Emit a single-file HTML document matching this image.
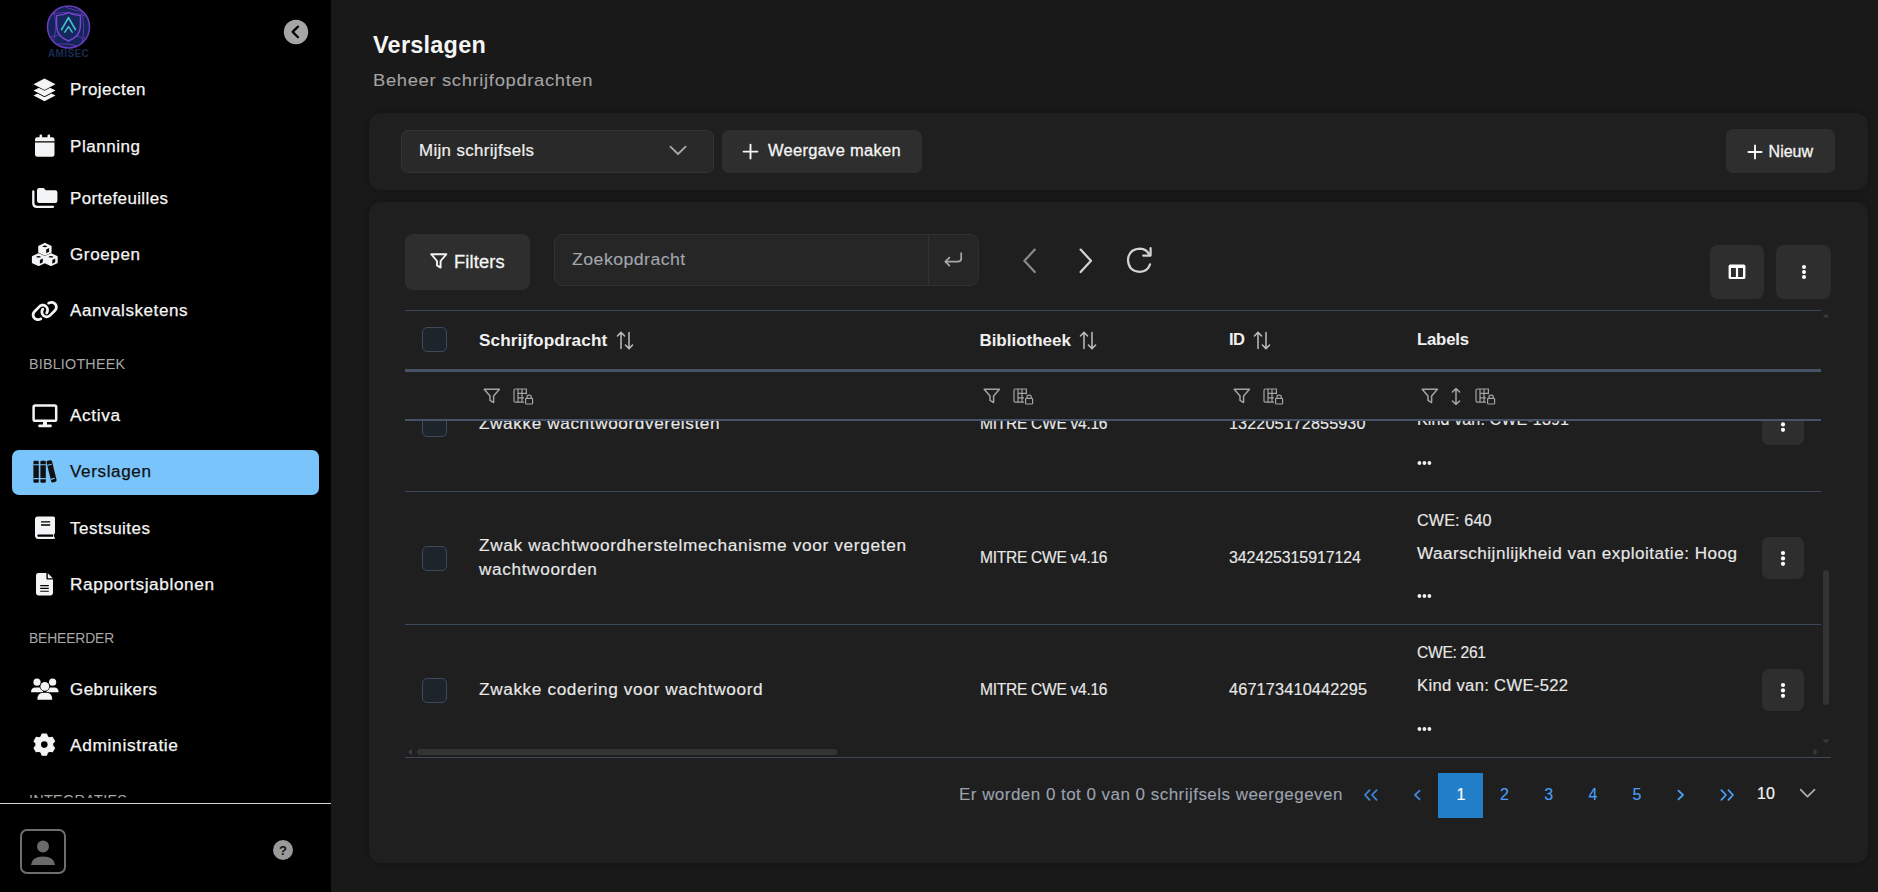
<!DOCTYPE html>
<html><head><meta charset="utf-8"><title>Verslagen</title>
<style>
html,body{margin:0;padding:0;}
body{width:1878px;height:892px;overflow:hidden;position:relative;background:#191919;font-family:"Liberation Sans",sans-serif;}
.a{position:absolute;box-sizing:border-box;}
svg.a{overflow:visible}
.t{position:absolute;white-space:nowrap;}
.card{background:#1f1f1f;border-radius:12px;box-shadow:0 0 6px rgba(0,0,0,0.25);}
</style></head><body>
<div class="a" style="left:0;top:0;width:331px;height:892px;background:#000"></div>
<div class="a" style="left:12px;top:450px;width:307px;height:45px;border-radius:7px;background:#78c4fb"></div>
<svg class="a" style="left:46px;top:4px" width="46" height="56" viewBox="0 0 46 56">
<defs><clipPath id="lc"><circle cx="22.5" cy="23" r="20.6"/></clipPath></defs>
<circle cx="22.5" cy="23" r="21" fill="#14245a" stroke="#6a3dbf" stroke-width="1.5"/>
<g clip-path="url(#lc)" fill="none" stroke="#5c37a6" stroke-width="1">
<path d="M0 12 Q20 4 46 14"/><path d="M0 34 Q24 26 46 38"/><path d="M6 2 Q14 22 5 46"/><path d="M33 1 Q42 22 34 46"/><path d="M2 42 Q22 36 42 46"/><path d="M14 0 Q30 10 46 6"/>
</g>
<path d="M22.5 8.6 Q28 11.4 34.4 11.6 V22.6 Q34 32.4 22.5 37 Q11 32.4 10.6 22.6 V11.6 Q17 11.4 22.5 8.6 Z" fill="#15275c" stroke="#7747cc" stroke-width="1.4"/>
<path d="M15.6 25.6 L22.5 13.6 L29.4 25.6" fill="none" stroke="#45c3c8" stroke-width="1.7" stroke-linecap="round" stroke-linejoin="round"/>
<path d="M18.8 28.2 L22.5 22.6 L26.2 28.2" fill="none" stroke="#45c3c8" stroke-width="1.5" stroke-linecap="round" stroke-linejoin="round"/>
<text x="22.6" y="53.2" text-anchor="middle" font-family="Liberation Sans" font-weight="700" font-size="10" fill="#1a2b50" letter-spacing="0.4">AMISEC</text>
</svg>
<svg class="a" style="left:283px;top:19px" width="26" height="26" viewBox="0 0 26 26">
<circle cx="13" cy="13" r="12.2" fill="#a6a6a6"/>
<path d="M15 7.6 L9.6 12.9 L15 18.2" fill="none" stroke="#000" stroke-width="2.2" stroke-linecap="round" stroke-linejoin="round"/>
</svg>
<div class="t" style="left:69.50px;top:82.00px;font-size:16px;line-height:16px;color:#f5f5f5;letter-spacing:0.466px;transform:scaleX(1.0584);transform-origin:0 0;-webkit-text-stroke:0.25px currentColor;">Projecten</div>
<div class="t" style="left:69.50px;top:139.00px;font-size:16px;line-height:16px;color:#f5f5f5;letter-spacing:0.522px;transform:scaleX(1.0623);transform-origin:0 0;-webkit-text-stroke:0.25px currentColor;">Planning</div>
<div class="t" style="left:69.50px;top:191.00px;font-size:16px;line-height:16px;color:#f5f5f5;letter-spacing:0.391px;transform:scaleX(1.0563);transform-origin:0 0;-webkit-text-stroke:0.25px currentColor;">Portefeuilles</div>
<div class="t" style="left:69.50px;top:247.00px;font-size:16px;line-height:16px;color:#f5f5f5;letter-spacing:0.609px;transform:scaleX(1.0623);transform-origin:0 0;-webkit-text-stroke:0.25px currentColor;">Groepen</div>
<div class="t" style="left:69.50px;top:303.00px;font-size:16px;line-height:16px;color:#f5f5f5;letter-spacing:0.525px;transform:scaleX(1.0645);transform-origin:0 0;-webkit-text-stroke:0.25px currentColor;">Aanvalsketens</div>
<div class="t" style="left:69.50px;top:408.00px;font-size:16px;line-height:16px;color:#f5f5f5;letter-spacing:0.596px;transform:scaleX(1.0734);transform-origin:0 0;-webkit-text-stroke:0.25px currentColor;">Activa</div>
<div class="t" style="left:69.50px;top:464.00px;font-size:16px;line-height:16px;color:#111;letter-spacing:0.573px;transform:scaleX(1.0688);transform-origin:0 0;-webkit-text-stroke:0.25px currentColor;">Verslagen</div>
<div class="t" style="left:69.50px;top:521.00px;font-size:16px;line-height:16px;color:#f5f5f5;letter-spacing:0.464px;transform:scaleX(1.0624);transform-origin:0 0;-webkit-text-stroke:0.25px currentColor;">Testsuites</div>
<div class="t" style="left:69.50px;top:577.00px;font-size:16px;line-height:16px;color:#f5f5f5;letter-spacing:0.576px;transform:scaleX(1.0740);transform-origin:0 0;-webkit-text-stroke:0.25px currentColor;">Rapportsjablonen</div>
<div class="t" style="left:69.50px;top:682.00px;font-size:16px;line-height:16px;color:#f5f5f5;letter-spacing:0.461px;transform:scaleX(1.0560);transform-origin:0 0;-webkit-text-stroke:0.25px currentColor;">Gebruikers</div>
<div class="t" style="left:69.50px;top:738.00px;font-size:16px;line-height:16px;color:#f5f5f5;letter-spacing:0.597px;transform:scaleX(1.0839);transform-origin:0 0;-webkit-text-stroke:0.25px currentColor;">Administratie</div>
<div class="t" style="left:28.90px;top:357.00px;font-size:14px;line-height:14px;color:#a8a8a8;letter-spacing:0.203px;transform:scaleX(1.0226);transform-origin:0 0;">BIBLIOTHEEK</div>
<div class="t" style="left:28.80px;top:631.00px;font-size:14px;line-height:14px;color:#a8a8a8;letter-spacing:-0.123px;transform:scaleX(0.9888);transform-origin:0 0;">BEHEERDER</div>
<div class="a" style="left:0;top:780px;width:331px;height:18px;overflow:hidden"><div class="t" style="left:28.90px;top:13.00px;font-size:14px;line-height:14px;color:#a8a8a8;letter-spacing:0.275px;transform:scaleX(1.0307);transform-origin:0 0;">INTEGRATIES</div></div>
<svg class="a" style="left:32px;top:77px" width="26" height="26" viewBox="0 0 26 26">
<g fill="#f3f4f6" stroke="#000" stroke-width="1.6" stroke-linejoin="round" paint-order="stroke">
<path d="M1.5 18.5 L12.5 13 L23.5 18.5 L12.5 24.2 Z"/>
<path d="M1.5 13.5 L12.5 8 L23.5 13.5 L12.5 19.2 Z"/>
<path d="M1.5 7.2 L12.5 1.5 L23.5 7.2 L12.5 12.9 Z"/>
</g></svg>
<svg class="a" style="left:34px;top:134px" width="22" height="24" viewBox="0 0 22 24">
<rect x="5.5" y="0.5" width="2.6" height="5" rx="1.2" fill="#f3f4f6"/>
<rect x="13.5" y="0.5" width="2.6" height="5" rx="1.2" fill="#f3f4f6"/>
<path d="M1 7.2 V5.5 Q1 3.2 3.3 3.2 H18.2 Q20.5 3.2 20.5 5.5 V7.2 Z" fill="#f3f4f6"/>
<path d="M1 8.6 H20.5 V20.5 Q20.5 22.8 18.2 22.8 H3.3 Q1 22.8 1 20.5 Z" fill="#f3f4f6"/>
</svg>
<svg class="a" style="left:31px;top:187px" width="28" height="22" viewBox="0 0 28 22">
<path d="M6 3.2 Q6 1 8.2 1 H12.6 L14.8 3.2 H24.2 Q26.4 3.2 26.4 5.4 V13.8 Q26.4 16 24.2 16 H8.2 Q6 16 6 13.8 Z" fill="#f3f4f6"/>
<path d="M2.3 4.5 V16.2 Q2.3 19.8 5.9 19.8 H22" fill="none" stroke="#f3f4f6" stroke-width="2.3" stroke-linecap="round"/>
</svg>
<svg class="a" style="left:31px;top:242px" width="28" height="26" viewBox="0 0 28 26">
<path d="M13.9 1.6000000000000005 L19.8 4.4 V10.1 L13.9 12.9 L8.0 10.1 V4.4 Z" fill="#f3f4f6" stroke="#f3f4f6" stroke-width="1.6" stroke-linejoin="round"/><path d="M11.3 4.5 Q13.9 2.6000000000000005 16.5 4.5 Q13.9 5.800000000000001 11.3 4.5 Z" fill="#000"/><path d="M15.200000000000001 7.5 L18.1 6.1 V9.8 L15.200000000000001 11.3 Z" fill="#000"/><path d="M7.6 12.000000000000002 L13.5 14.8 V20.5 L7.6 23.3 L1.6999999999999993 20.5 V14.8 Z" fill="#f3f4f6" stroke="#f3f4f6" stroke-width="1.6" stroke-linejoin="round"/><path d="M5.0 14.900000000000002 Q7.6 13.000000000000002 10.2 14.900000000000002 Q7.6 16.200000000000003 5.0 14.900000000000002 Z" fill="#000"/><path d="M8.9 17.900000000000002 L11.8 16.5 V20.200000000000003 L8.9 21.700000000000003 Z" fill="#000"/><path d="M20 12.000000000000002 L25.9 14.8 V20.5 L20 23.3 L14.1 20.5 V14.8 Z" fill="#f3f4f6" stroke="#f3f4f6" stroke-width="1.6" stroke-linejoin="round"/><path d="M17.4 14.900000000000002 Q20 13.000000000000002 22.6 14.900000000000002 Q20 16.200000000000003 17.4 14.900000000000002 Z" fill="#000"/><path d="M21.3 17.900000000000002 L24.2 16.5 V20.200000000000003 L21.3 21.700000000000003 Z" fill="#000"/>
</svg>
<svg class="a" style="left:31px;top:299.5px" width="27.5" height="22" viewBox="0 0 640 512">
<path fill="#f3f4f6" d="M579.8 267.7c56.5-56.5 56.5-148 0-204.5c-50-50-128.8-56.5-186.3-15.4l-1.6 1.1c-14.4 10.300-17.7 30.3-7.4 44.6s30.3 17.7 44.6 7.4l1.6-1.1c32.1-22.9 76-19.3 103.8 8.6c31.5 31.5 31.5 82.5 0 114L422.3 334.8c-31.5 31.5-82.5 31.5-114 0c-27.9-27.9-31.5-71.8-8.6-103.8l1.1-1.6c10.3-14.4 6.900-34.4-7.4-44.6s-34.4-6.9-44.6 7.4l-1.1 1.6C206.5 251.2 213 330 263 380c56.5 56.5 148 56.5 204.5 0L579.8 267.7zM60.2 244.3c-56.5 56.5-56.5 148 0 204.5c50 50 128.8 56.5 186.3 15.4l1.6-1.1c14.4-10.3 17.7-30.3 7.4-44.6s-30.3-17.7-44.6-7.4l-1.6 1.1c-32.1 22.9-76 19.3-103.8-8.6C74 372 74 321 105.5 289.5L217.7 177.2c31.5-31.5 82.5-31.5 114 0c27.9 27.9 31.5 71.8 8.6 103.9l-1.1 1.6c-10.3 14.4-6.9 34.4 7.4 44.6s34.4 6.9 44.6-7.4l1.1-1.6C433.5 260.8 427 182 377 132c-56.5-56.5-148-56.5-204.5 0L60.2 244.3z"/>
</svg>
<svg class="a" style="left:31px;top:403px" width="28" height="26" viewBox="0 0 28 26">
<rect x="2.6" y="2.6" width="22.6" height="15.2" rx="1.6" fill="none" stroke="#f3f4f6" stroke-width="2.5"/>
<rect x="12" y="18" width="4" height="4" fill="#f3f4f6"/>
<rect x="7.2" y="21.6" width="13.6" height="2.6" rx="1.2" fill="#f3f4f6"/>
</svg>
<svg class="a" style="left:32px;top:459px" width="26" height="26" viewBox="0 0 26 26">
<g fill="#111">
<rect x="1.4" y="1.7" width="5.4" height="22" rx="1.3"/>
<rect x="8.4" y="1.7" width="5.4" height="22" rx="1.3"/>
<path d="M14.6 3.4 Q14.4 2 15.8 1.7 L18.4 1.2 Q19.6 1 20 2.3 L24.6 21 Q24.8 22.3 23.6 22.7 L20.8 23.5 Q19.6 23.7 19.2 22.5 Z"/>
</g>
<g stroke="#78c4fb" stroke-width="1.1">
<path d="M1.4 5.8 H13.8 M1.4 19.6 H13.8"/>
<path d="M15.4 6.2 L19.6 5.2 M18.6 20.4 L22.8 19.3"/>
</g></svg>
<svg class="a" style="left:34px;top:515px" width="23" height="26" viewBox="0 0 23 26">
<path d="M1 4.4 Q1 1.6 3.8 1.6 H19.4 Q21 1.6 21 3.2 V17.6 Q21 18.8 20 19.2 V21.8 Q21 22 21 23 Q21 24 19.6 24 H4.4 Q1 24 1 20.6 Z" fill="#f3f4f6"/>
<path d="M7 6.9 H16.2 M7 10 H16.2" stroke="#000" stroke-width="1.4"/>
<path d="M4.4 19.6 H19.2 V21.8 H4.4 Q3.3 21.8 3.3 20.7 Q3.3 19.6 4.4 19.6 Z" fill="#000"/>
</svg>
<svg class="a" style="left:35px;top:572px" width="20" height="25" viewBox="0 0 20 25">
<path d="M1 3.4 Q1 1 3.4 1 H11.4 V6.6 Q11.4 7.6 12.4 7.6 H18 V21 Q18 23.4 15.6 23.4 H3.4 Q1 23.4 1 21 Z" fill="#f3f4f6"/>
<path d="M12.8 1.2 L17.8 6.2 H12.8 Z" fill="#f3f4f6"/>
<path d="M5.2 13.6 H13.8 M5.2 16.4 H13.8 M5.2 19.2 H13.8" stroke="#000" stroke-width="1.1"/>
</svg>
<svg class="a" style="left:30px;top:677px" width="30" height="26" viewBox="0 0 30 26">
<g fill="#f3f4f6" stroke="#000" stroke-width="1.2" paint-order="stroke">
<circle cx="7" cy="5.2" r="3.6"/><circle cx="22.6" cy="5.2" r="3.6"/>
<path d="M1 15.2 Q1 10.4 5.4 10.4 H9.4 Q12 10.4 13 12.6 V15.2 Z"/>
<path d="M16.6 15.2 V12.6 Q17.6 10.4 20.2 10.4 H24.2 Q28.6 10.4 28.6 15.2 Z"/>
<circle cx="14.8" cy="9.4" r="4.4"/>
<path d="M7.4 22.8 Q7.4 15.8 13 15.8 H16.6 Q22.2 15.8 22.2 22.8 Z"/>
</g></svg>
<svg class="a" style="left:33px;top:733px" width="24" height="25" viewBox="0 0 24 25">
<path d="M8.11 3.83 L9.14 1.02 L13.46 1.02 L14.49 3.83 L16.43 4.95 L19.39 4.44 L21.54 8.18 L19.62 10.48 L19.62 12.72 L21.54 15.02 L19.39 18.76 L16.43 18.25 L14.49 19.37 L13.46 22.18 L9.14 22.18 L8.11 19.37 L6.17 18.25 L3.21 18.76 L1.06 15.02 L2.98 12.72 L2.98 10.48 L1.06 8.18 L3.21 4.44 L6.17 4.95 Z" fill="#f3f4f6" stroke="#f3f4f6" stroke-width="1.2" stroke-linejoin="round"/>
<circle cx="11.3" cy="11.6" r="3.3" fill="#000"/>
</svg>
<div class="a" style="left:0;top:803px;width:331px;height:1px;background:#d4d4d4"></div>
<div class="a" style="left:20px;top:829px;width:46px;height:45px;border:2.5px solid #6e6e6e;border-radius:7px;background:#000"></div>
<svg class="a" style="left:20px;top:829px" width="46" height="45" viewBox="0 0 46 45">
<circle cx="23" cy="17.6" r="6" fill="#6a6a6a"/>
<path d="M11 36 Q11.6 27.6 23 27.4 Q34.4 27.6 35 36 Z" fill="#6a6a6a"/>
</svg>
<svg class="a" style="left:272px;top:839px" width="22" height="22" viewBox="0 0 22 22">
<circle cx="11" cy="11" r="10" fill="#9a9a9a"/>
<text x="11" y="15.6" text-anchor="middle" font-family="Liberation Sans" font-weight="700" font-size="13" fill="#111">?</text>
</svg>
<div class="t" style="left:373.00px;top:34.00px;font-size:23px;line-height:23px;color:#f5f5f5;font-weight:700;letter-spacing:0.253px;transform:scaleX(1.0190);transform-origin:0 0;">Verslagen</div>
<div class="t" style="left:373.00px;top:72.00px;font-size:17px;line-height:17px;color:#a3a3a3;letter-spacing:0.615px;transform:scaleX(1.0808);transform-origin:0 0;-webkit-text-stroke:0.1px currentColor;">Beheer schrijfopdrachten</div>
<div class="a card" style="left:369px;top:113px;width:1499px;height:77px"></div>
<div class="a" style="left:401px;top:130px;width:313px;height:43px;border:1px solid #333;border-radius:7px;background:#292929"></div>
<div class="t" style="left:418.60px;top:143.00px;font-size:16px;line-height:16px;color:#f0f0f0;letter-spacing:0.348px;transform:scaleX(1.0529);transform-origin:0 0;-webkit-text-stroke:0.2px currentColor;">Mijn schrijfsels</div>
<svg class="a" style="left:668px;top:144px" width="20" height="13" viewBox="0 0 20 13"><path d="M2.4 2.6 L10 10 L17.6 2.6" fill="none" stroke="#a8a8a8" stroke-width="1.8" stroke-linecap="round" stroke-linejoin="round"/></svg>
<div class="a" style="left:722px;top:130px;width:200px;height:43px;border-radius:7px;background:#2e2e2e"></div>
<svg class="a" style="left:742px;top:143px" width="17" height="17" viewBox="0 0 17 17"><path d="M8.5 1.6 V15.6 M1.6 8.6 H15.4" stroke="#f5f5f5" stroke-width="1.9" stroke-linecap="round"/></svg>
<div class="t" style="left:767.80px;top:143.00px;font-size:16px;line-height:16px;color:#f5f5f5;letter-spacing:0.279px;transform:scaleX(1.0299);transform-origin:0 0;-webkit-text-stroke:0.3px currentColor;">Weergave maken</div>
<div class="a" style="left:1726px;top:129px;width:109px;height:44px;border-radius:7px;background:#2e2e2e"></div>
<svg class="a" style="left:1747px;top:144px" width="16" height="16" viewBox="0 0 16 16"><path d="M8 1.4 V14.6 M1.4 8 H14.6" stroke="#f5f5f5" stroke-width="1.9" stroke-linecap="round"/></svg>
<div class="t" style="left:1768.60px;top:144.00px;font-size:16px;line-height:16px;color:#f5f5f5;letter-spacing:-0.010px;-webkit-text-stroke:0.3px currentColor;">Nieuw</div>
<div class="a card" style="left:369px;top:202px;width:1499px;height:661px"></div>
<div class="a" style="left:405px;top:234px;width:125px;height:56px;border-radius:8px;background:#2e2e2e"></div>
<svg class="a" style="left:430px;top:253px" width="18" height="16" viewBox="0 0 18 16">
<path d="M1.2 1.2 H16.4 L10.6 8 V14.6 L7 12.4 V8 Z" fill="none" stroke="#f5f5f5" stroke-width="1.9" stroke-linejoin="round"/></svg>
<div class="t" style="left:453.50px;top:253.00px;font-size:18px;line-height:18px;color:#f5f5f5;letter-spacing:0.126px;transform:scaleX(1.0157);transform-origin:0 0;-webkit-text-stroke:0.3px currentColor;">Filters</div>
<div class="a" style="left:554px;top:234px;width:425px;height:52px;border:1px solid #303030;border-radius:8px;background:#262626"></div>
<div class="a" style="left:928px;top:235px;width:1px;height:50px;background:#333"></div>
<div class="t" style="left:571.70px;top:251.00px;font-size:17px;line-height:17px;color:#a1a6ae;letter-spacing:0.407px;transform:scaleX(1.0449);transform-origin:0 0;-webkit-text-stroke:0.1px currentColor;">Zoekopdracht</div>
<svg class="a" style="left:943px;top:251px" width="21" height="17" viewBox="0 0 21 17"><g fill="none" stroke="#a8a8a8" stroke-width="1.7" stroke-linecap="round" stroke-linejoin="round"><path d="M18.2 2 V7.6 Q18.2 10.6 15.2 10.6 H2.6"/><path d="M6.4 6.6 L2.4 10.6 L6.4 14.6"/></g></svg>
<svg class="a" style="left:1019px;top:246px" width="22" height="30" viewBox="0 0 22 30"><path d="M15.8 3.6 L5.4 14.8 L15.8 26" fill="none" stroke="#8a8a8a" stroke-width="2.2" stroke-linecap="round" stroke-linejoin="round"/></svg>
<svg class="a" style="left:1075px;top:246px" width="22" height="30" viewBox="0 0 22 30"><path d="M5.6 3.6 L16 14.8 L5.6 26" fill="none" stroke="#d4d4d4" stroke-width="2.2" stroke-linecap="round" stroke-linejoin="round"/></svg>
<svg class="a" style="left:1124px;top:245px" width="32" height="30" viewBox="0 0 32 30"><g fill="none" stroke="#d4d4d4" stroke-width="2.2" stroke-linecap="round" stroke-linejoin="round"><path d="M25.4 10 Q22.6 3.8 16 3.6 Q4.6 4 4 15 Q4.4 26.2 15.6 26.8 Q23.8 26.6 26 19.4"/><path d="M26.6 3.2 V10.6 H19.2"/></g></svg>
<div class="a" style="left:1710px;top:245px;width:54px;height:54px;border-radius:8px;background:#2e2e2e"></div>
<svg class="a" style="left:1727px;top:263px" width="20" height="18" viewBox="0 0 20 18"><rect x="1.6" y="1.6" width="16.8" height="14.4" rx="1.6" fill="#fff"/><rect x="4" y="5" width="4.9" height="9" fill="#2e2e2e"/><rect x="11.1" y="5" width="4.9" height="9" fill="#2e2e2e"/></svg>
<div class="a" style="left:1776px;top:245px;width:55px;height:54px;border-radius:8px;background:#2e2e2e"></div>
<svg class="a" style="left:1799.8px;top:263px" width="8" height="18" viewBox="0 0 8 18">
<g fill="#fff"><circle cx="4" cy="4" r="2.0"/><circle cx="4" cy="9" r="2.0"/><circle cx="4" cy="14" r="2.0"/></g></svg>
<div class="a" style="left:405px;top:310px;width:1416px;height:1px;background:#3c4757"></div>
<div class="a" style="left:405px;top:369px;width:1416px;height:3px;background:#465366"></div>
<div class="a" style="left:405px;top:419px;width:1416px;height:2px;background:#465366"></div>
<div class="a" style="left:422px;top:327px;width:25px;height:25px;border:1px solid #3d4a5c;border-radius:5px;background:#1e242c"></div>
<div class="t" style="left:479.20px;top:332.00px;font-size:17px;line-height:17px;color:#f0f0f0;font-weight:700;letter-spacing:0.091px;transform:scaleX(1.0102);transform-origin:0 0;">Schrijfopdracht</div>
<svg class="a" style="left:616px;top:330.5px" width="18" height="19" viewBox="0 0 18 19">
<g fill="none" stroke="#bdbdbd" stroke-width="1.5" stroke-linecap="round" stroke-linejoin="round">
<path d="M5 17.6 V1.4 M1.4 5 L5 1.4 L8.6 5"/>
<path d="M13 1.4 V17.6 M9.4 14 L13 17.6 L16.6 14"/>
</g></svg>
<div class="t" style="left:979.40px;top:332.00px;font-size:17px;line-height:17px;color:#f0f0f0;font-weight:700;letter-spacing:-0.016px;">Bibliotheek</div>
<svg class="a" style="left:1079px;top:330.5px" width="18" height="19" viewBox="0 0 18 19">
<g fill="none" stroke="#bdbdbd" stroke-width="1.5" stroke-linecap="round" stroke-linejoin="round">
<path d="M5 17.6 V1.4 M1.4 5 L5 1.4 L8.6 5"/>
<path d="M13 1.4 V17.6 M9.4 14 L13 17.6 L16.6 14"/>
</g></svg>
<div class="t" style="left:1229.30px;top:331.00px;font-size:17px;line-height:17px;color:#f0f0f0;font-weight:700;letter-spacing:-0.515px;transform:scaleX(0.9706);transform-origin:0 0;">ID</div>
<svg class="a" style="left:1253px;top:330.5px" width="18" height="19" viewBox="0 0 18 19">
<g fill="none" stroke="#bdbdbd" stroke-width="1.5" stroke-linecap="round" stroke-linejoin="round">
<path d="M5 17.6 V1.4 M1.4 5 L5 1.4 L8.6 5"/>
<path d="M13 1.4 V17.6 M9.4 14 L13 17.6 L16.6 14"/>
</g></svg>
<div class="t" style="left:1417.00px;top:331.00px;font-size:17px;line-height:17px;color:#f0f0f0;font-weight:700;letter-spacing:-0.192px;transform:scaleX(0.9825);transform-origin:0 0;">Labels</div>
<svg class="a" style="left:482.5px;top:388px" width="18" height="16" viewBox="0 0 18 16">
<path d="M1.2 1.2 H16.4 L10.6 8 V14.6 L7 12.4 V8 Z" fill="none" stroke="#a3a3a3" stroke-width="1.5" stroke-linejoin="round"/></svg>
<svg class="a" style="left:512.5px;top:388px" width="22" height="17" viewBox="0 0 22 17">
<g fill="none" stroke="#a3a3a3" stroke-width="1.2">
<path d="M13.4 6.2 V1 H2.4 Q1 1 1 2.4 V12.8 Q1 14.2 2.4 14.2 H11"/>
<path d="M5 1 V14.2 M9 1 V14.2 M5 5.4 H13.4 M5 9.8 H11"/>
<rect x="12.6" y="10.4" width="7" height="5.6" rx="0.8"/>
<path d="M14 10.4 V8.8 Q14 7.2 16.1 7.2 Q18.2 7.2 18.2 8.8 V10.4"/>
</g></svg>
<svg class="a" style="left:982.5px;top:388px" width="18" height="16" viewBox="0 0 18 16">
<path d="M1.2 1.2 H16.4 L10.6 8 V14.6 L7 12.4 V8 Z" fill="none" stroke="#a3a3a3" stroke-width="1.5" stroke-linejoin="round"/></svg>
<svg class="a" style="left:1012.5px;top:388px" width="22" height="17" viewBox="0 0 22 17">
<g fill="none" stroke="#a3a3a3" stroke-width="1.2">
<path d="M13.4 6.2 V1 H2.4 Q1 1 1 2.4 V12.8 Q1 14.2 2.4 14.2 H11"/>
<path d="M5 1 V14.2 M9 1 V14.2 M5 5.4 H13.4 M5 9.8 H11"/>
<rect x="12.6" y="10.4" width="7" height="5.6" rx="0.8"/>
<path d="M14 10.4 V8.8 Q14 7.2 16.1 7.2 Q18.2 7.2 18.2 8.8 V10.4"/>
</g></svg>
<svg class="a" style="left:1232.5px;top:388px" width="18" height="16" viewBox="0 0 18 16">
<path d="M1.2 1.2 H16.4 L10.6 8 V14.6 L7 12.4 V8 Z" fill="none" stroke="#a3a3a3" stroke-width="1.5" stroke-linejoin="round"/></svg>
<svg class="a" style="left:1262.5px;top:388px" width="22" height="17" viewBox="0 0 22 17">
<g fill="none" stroke="#a3a3a3" stroke-width="1.2">
<path d="M13.4 6.2 V1 H2.4 Q1 1 1 2.4 V12.8 Q1 14.2 2.4 14.2 H11"/>
<path d="M5 1 V14.2 M9 1 V14.2 M5 5.4 H13.4 M5 9.8 H11"/>
<rect x="12.6" y="10.4" width="7" height="5.6" rx="0.8"/>
<path d="M14 10.4 V8.8 Q14 7.2 16.1 7.2 Q18.2 7.2 18.2 8.8 V10.4"/>
</g></svg>
<svg class="a" style="left:1420.5px;top:388px" width="18" height="16" viewBox="0 0 18 16">
<path d="M1.2 1.2 H16.4 L10.6 8 V14.6 L7 12.4 V8 Z" fill="none" stroke="#a3a3a3" stroke-width="1.5" stroke-linejoin="round"/></svg>
<svg class="a" style="left:1474.5px;top:388px" width="22" height="17" viewBox="0 0 22 17">
<g fill="none" stroke="#a3a3a3" stroke-width="1.2">
<path d="M13.4 6.2 V1 H2.4 Q1 1 1 2.4 V12.8 Q1 14.2 2.4 14.2 H11"/>
<path d="M5 1 V14.2 M9 1 V14.2 M5 5.4 H13.4 M5 9.8 H11"/>
<rect x="12.6" y="10.4" width="7" height="5.6" rx="0.8"/>
<path d="M14 10.4 V8.8 Q14 7.2 16.1 7.2 Q18.2 7.2 18.2 8.8 V10.4"/>
</g></svg>
<svg class="a" style="left:1450px;top:387px" width="12" height="19" viewBox="0 0 12 19"><g fill="none" stroke="#a3a3a3" stroke-width="1.5" stroke-linecap="round" stroke-linejoin="round"><path d="M6 1.6 V17.4 M2.4 5 L6 1.6 L9.6 5 M2.4 14 L6 17.4 L9.6 14"/></g></svg>
<div class="a" style="left:369px;top:421px;width:1499px;height:336px;overflow:hidden"><div class="a" style="left:-369px;top:0;width:1878px;height:400px"><div class="a" style="left:422px;top:-9px;width:25px;height:25px;border:1px solid #3d4a5c;border-radius:5px;background:#1e242c"></div>
<div class="t" style="left:478.80px;top:-5.00px;font-size:16px;line-height:16px;color:#e8e8e8;letter-spacing:0.571px;transform:scaleX(1.0731);transform-origin:0 0;-webkit-text-stroke:0.15px currentColor;">Zwakke wachtwoordvereisten</div>
<div class="t" style="left:979.50px;top:-5.00px;font-size:16px;line-height:16px;color:#e8e8e8;letter-spacing:-0.280px;transform:scaleX(0.9718);transform-origin:0 0;-webkit-text-stroke:0.15px currentColor;">MITRE CWE v4.16</div>
<div class="t" style="left:1229.40px;top:-5.00px;font-size:16px;line-height:16px;color:#e8e8e8;letter-spacing:0.105px;transform:scaleX(1.0112);transform-origin:0 0;-webkit-text-stroke:0.15px currentColor;">132205172855930</div>
<div class="t" style="left:1417.00px;top:-42.00px;font-size:16px;line-height:16px;color:#e8e8e8;letter-spacing:-0.210px;transform:scaleX(0.9802);transform-origin:0 0;-webkit-text-stroke:0.15px currentColor;">CWE: 521</div>
<div class="t" style="left:1417.00px;top:-9.00px;font-size:16px;line-height:16px;color:#e8e8e8;letter-spacing:0.075px;transform:scaleX(1.0086);transform-origin:0 0;-webkit-text-stroke:0.15px currentColor;">Kind van: CWE-1391</div>
<svg class="a" style="left:1416.5px;top:38.5px" width="16" height="6" viewBox="0 0 16 6"><g fill="#eee"><circle cx="2.4" cy="3" r="1.9"/><circle cx="7.4" cy="3" r="1.9"/><circle cx="12.4" cy="3" r="1.9"/></g></svg>
<div class="a" style="left:1762px;top:-18px;width:42px;height:42px;border-radius:7px;background:#2e2e2e"></div>
<svg class="a" style="left:1779px;top:-6.4px" width="8" height="18.8" viewBox="0 0 8 18.8">
<g fill="#fff"><circle cx="4" cy="4" r="2.1"/><circle cx="4" cy="9.4" r="2.1"/><circle cx="4" cy="14.8" r="2.1"/></g></svg>
<div class="a" style="left:405px;top:70px;width:1416px;height:1px;background:#3c4757"></div>
<div class="a" style="left:422px;top:125px;width:25px;height:25px;border:1px solid #3d4a5c;border-radius:5px;background:#1e242c"></div>
<div class="t" style="left:479.30px;top:117.00px;font-size:16px;line-height:16px;color:#e8e8e8;letter-spacing:0.597px;transform:scaleX(1.0785);transform-origin:0 0;-webkit-text-stroke:0.15px currentColor;">Zwak wachtwoordherstelmechanisme voor vergeten</div>
<div class="t" style="left:479.39px;top:141.00px;font-size:16px;line-height:16px;color:#e8e8e8;letter-spacing:0.625px;transform:scaleX(1.0713);transform-origin:0 0;-webkit-text-stroke:0.15px currentColor;">wachtwoorden</div>
<div class="t" style="left:979.50px;top:129.00px;font-size:16px;line-height:16px;color:#e8e8e8;letter-spacing:-0.280px;transform:scaleX(0.9718);transform-origin:0 0;-webkit-text-stroke:0.15px currentColor;">MITRE CWE v4.16</div>
<div class="t" style="left:1229.40px;top:129.00px;font-size:16px;line-height:16px;color:#e8e8e8;letter-spacing:-0.055px;transform:scaleX(0.9943);transform-origin:0 0;-webkit-text-stroke:0.15px currentColor;">342425315917124</div>
<div class="t" style="left:1417.00px;top:92.00px;font-size:16px;line-height:16px;color:#e8e8e8;letter-spacing:0.114px;transform:scaleX(1.0111);transform-origin:0 0;-webkit-text-stroke:0.15px currentColor;">CWE: 640</div>
<div class="t" style="left:1417.00px;top:125.00px;font-size:16px;line-height:16px;color:#e8e8e8;letter-spacing:0.464px;transform:scaleX(1.0687);transform-origin:0 0;-webkit-text-stroke:0.15px currentColor;">Waarschijnlijkheid van exploitatie: Hoog</div>
<svg class="a" style="left:1416.5px;top:171.5px" width="16" height="6" viewBox="0 0 16 6"><g fill="#eee"><circle cx="2.4" cy="3" r="1.9"/><circle cx="7.4" cy="3" r="1.9"/><circle cx="12.4" cy="3" r="1.9"/></g></svg>
<div class="a" style="left:1762px;top:116px;width:42px;height:42px;border-radius:7px;background:#2e2e2e"></div>
<svg class="a" style="left:1779px;top:127.6px" width="8" height="18.8" viewBox="0 0 8 18.8">
<g fill="#fff"><circle cx="4" cy="4" r="2.1"/><circle cx="4" cy="9.4" r="2.1"/><circle cx="4" cy="14.8" r="2.1"/></g></svg>
<div class="a" style="left:405px;top:203px;width:1416px;height:1px;background:#3c4757"></div>
<div class="a" style="left:422px;top:257px;width:25px;height:25px;border:1px solid #3d4a5c;border-radius:5px;background:#1e242c"></div>
<div class="t" style="left:478.80px;top:261.00px;font-size:16px;line-height:16px;color:#e8e8e8;letter-spacing:0.578px;transform:scaleX(1.0757);transform-origin:0 0;-webkit-text-stroke:0.15px currentColor;">Zwakke codering voor wachtwoord</div>
<div class="t" style="left:979.50px;top:261.00px;font-size:16px;line-height:16px;color:#e8e8e8;letter-spacing:-0.280px;transform:scaleX(0.9718);transform-origin:0 0;-webkit-text-stroke:0.15px currentColor;">MITRE CWE v4.16</div>
<div class="t" style="left:1229.40px;top:261.00px;font-size:16px;line-height:16px;color:#e8e8e8;letter-spacing:0.157px;transform:scaleX(1.0168);transform-origin:0 0;-webkit-text-stroke:0.15px currentColor;">467173410442295</div>
<div class="t" style="left:1417.00px;top:224.00px;font-size:16px;line-height:16px;color:#e8e8e8;letter-spacing:-0.285px;transform:scaleX(0.9734);transform-origin:0 0;-webkit-text-stroke:0.15px currentColor;">CWE: 261</div>
<div class="t" style="left:1417.00px;top:257.00px;font-size:16px;line-height:16px;color:#e8e8e8;letter-spacing:0.317px;transform:scaleX(1.0374);transform-origin:0 0;-webkit-text-stroke:0.15px currentColor;">Kind van: CWE-522</div>
<svg class="a" style="left:1416.5px;top:304.5px" width="16" height="6" viewBox="0 0 16 6"><g fill="#eee"><circle cx="2.4" cy="3" r="1.9"/><circle cx="7.4" cy="3" r="1.9"/><circle cx="12.4" cy="3" r="1.9"/></g></svg>
<div class="a" style="left:1762px;top:248px;width:42px;height:42px;border-radius:7px;background:#2e2e2e"></div>
<svg class="a" style="left:1779px;top:259.6px" width="8" height="18.8" viewBox="0 0 8 18.8">
<g fill="#fff"><circle cx="4" cy="4" r="2.1"/><circle cx="4" cy="9.4" r="2.1"/><circle cx="4" cy="14.8" r="2.1"/></g></svg>
<div class="a" style="left:405px;top:336px;width:1416px;height:1px;background:#3c4757"></div></div></div>
<div class="a" style="left:1823px;top:570px;width:6px;height:135px;border-radius:3px;background:#333"></div>
<div class="a" style="left:417px;top:749px;width:420px;height:6px;border-radius:3px;background:#333"></div>
<svg class="a" style="left:1820px;top:311px" width="12" height="8" viewBox="0 0 12 8"><path d="M2.6 6.6 L6 2.6 L9.4 6.6 Z" fill="#3a3a3a"/></svg>
<svg class="a" style="left:1820px;top:738px" width="12" height="8" viewBox="0 0 12 8"><path d="M2.6 1.6 L6 5.6 L9.4 1.6 Z" fill="#3a3a3a"/></svg>
<svg class="a" style="left:404px;top:746px" width="10" height="12" viewBox="0 0 10 12"><path d="M8 2.6 L4 6 L8 9.4 Z" fill="#3a3a3a"/></svg>
<svg class="a" style="left:1811px;top:746px" width="10" height="12" viewBox="0 0 10 12"><path d="M2.6 2.6 L6.6 6 L2.6 9.4 Z" fill="#3a3a3a"/></svg>
<div class="a" style="left:405px;top:757px;width:1426px;height:1px;background:#3c4757"></div>
<div class="t" style="left:958.60px;top:787.00px;font-size:16px;line-height:16px;color:#9ca3af;letter-spacing:0.438px;transform:scaleX(1.0629);transform-origin:0 0;-webkit-text-stroke:0.1px currentColor;">Er worden 0 tot 0 van 0 schrijfsels weergegeven</div>
<div class="a" style="left:1438px;top:773px;width:45px;height:45px;background:#2180c9"></div>
<div class="t" style="left:1456.50px;top:787.00px;font-size:16px;line-height:16px;color:#ffffff;-webkit-text-stroke:0.15px currentColor;">1</div>
<div class="t" style="left:1500.00px;top:787.00px;font-size:16px;line-height:16px;color:#4a9ef5;-webkit-text-stroke:0.15px currentColor;">2</div>
<div class="t" style="left:1544.30px;top:787.00px;font-size:16px;line-height:16px;color:#4a9ef5;-webkit-text-stroke:0.15px currentColor;">3</div>
<div class="t" style="left:1588.50px;top:787.00px;font-size:16px;line-height:16px;color:#4a9ef5;-webkit-text-stroke:0.15px currentColor;">4</div>
<div class="t" style="left:1632.50px;top:787.00px;font-size:16px;line-height:16px;color:#4a9ef5;-webkit-text-stroke:0.15px currentColor;">5</div>
<svg class="a" style="left:1362px;top:787px" width="20" height="16" viewBox="0 0 20 16"><g fill="none" stroke="#3f86d6" stroke-width="1.8" stroke-linecap="round" stroke-linejoin="round"><path d="M7.6 3.2 L3 8 L7.6 12.8"/><path d="M14.6 3.2 L10 8 L14.6 12.8"/></g></svg>
<svg class="a" style="left:1410px;top:787px" width="14" height="16" viewBox="0 0 14 16"><path d="M9.6 3.6 L5 8 L9.6 12.4" fill="none" stroke="#3f86d6" stroke-width="1.8" stroke-linecap="round" stroke-linejoin="round"/></svg>
<svg class="a" style="left:1674px;top:787px" width="14" height="16" viewBox="0 0 14 16"><path d="M4.4 3.6 L9 8 L4.4 12.4" fill="none" stroke="#4a9ef5" stroke-width="1.8" stroke-linecap="round" stroke-linejoin="round"/></svg>
<svg class="a" style="left:1716px;top:787px" width="20" height="16" viewBox="0 0 20 16"><g fill="none" stroke="#4a9ef5" stroke-width="1.8" stroke-linecap="round" stroke-linejoin="round"><path d="M5.4 3.2 L10 8 L5.4 12.8"/><path d="M12.4 3.2 L17 8 L12.4 12.8"/></g></svg>
<div class="t" style="left:1757.00px;top:786.00px;font-size:16px;line-height:16px;color:#f5f5f5;-webkit-text-stroke:0.2px currentColor;">10</div>
<svg class="a" style="left:1797px;top:785px" width="21" height="16" viewBox="0 0 21 16"><path d="M3.6 4.6 L10.5 11.6 L17.6 4.6" fill="none" stroke="#b0b0b0" stroke-width="1.6" stroke-linecap="round" stroke-linejoin="round"/></svg>
</body></html>
